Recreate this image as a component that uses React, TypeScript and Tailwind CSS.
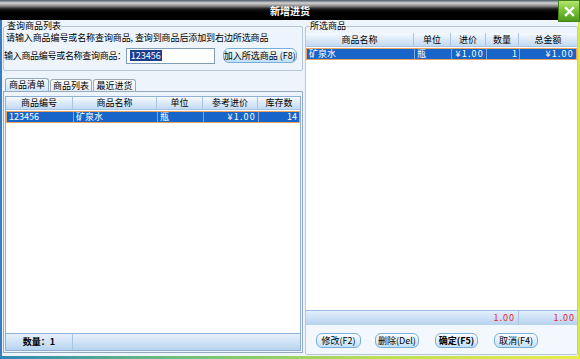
import React from "react";

const FONT = "font-['Noto_Sans_CJK_SC','Noto_Sans',sans-serif]";

function HeaderCell({ children, last }: { children: React.ReactNode; last?: boolean }) {
  return (
    <div
      className={`h-full flex items-center justify-center ${last ? "" : "border-r border-[#a9c3e0]"}`}
    >
      {children}
    </div>
  );
}

function RowCell({
  children,
  right,
  last,
}: {
  children?: React.ReactNode;
  right?: boolean;
  last?: boolean;
}) {
  return (
    <div
      className={`h-full flex items-center px-[2px] ${right ? "justify-end" : "justify-start"} ${
        last ? "" : "border-r border-[#7fa6dc]"
      }`}
    >
      {children}
    </div>
  );
}

function PillButton({ children, bold }: { children: React.ReactNode; bold?: boolean }) {
  return (
    <div
      className={`h-[15px] flex items-center justify-center whitespace-nowrap rounded-[6px] border border-[#7aaed6] bg-[linear-gradient(to_bottom,#f6fbff,#dceefc_55%,#bfe0f8)] text-[9px] text-black shadow-[inset_0_1px_0_#ffffff] ${
        bold ? "font-bold" : ""
      }`}
    >
      {children}
    </div>
  );
}

export default function App() {
  return (
    <div
      className={`w-[580px] h-[359px] overflow-hidden relative flex flex-col bg-[#eef4fb] text-[9px] leading-[10px] text-black ${FONT}`}
    >
      {/* Title bar */}
      <div className="h-[20px] shrink-0 flex items-center justify-center bg-[linear-gradient(to_bottom,#4a5868_0px,#d4d4d4_3px,#8a8a8a_6px,#1a1a1a_9px,#000000_12px,#000000)]">
        <span className="text-white font-bold text-[10px] leading-[10px] mt-[2px]">新增进货</span>
      </div>

      {/* Close button (window control) */}
      <div className="absolute top-0 right-0 w-[22px] h-[22px] flex items-center justify-center border border-[#3f7f18] bg-[linear-gradient(to_bottom,#b5e66e,#7cc43a_45%,#4f9a1c)]">
        <svg width="11" height="11" viewBox="0 0 11 11">
          <path d="M2 2 L9 9 M9 2 L2 9" stroke="#ffffff" strokeWidth="2.4" strokeLinecap="square" />
        </svg>
      </div>

      {/* Body */}
      <div className="flex-1 flex min-h-0">
        <div className="w-[2px] bg-[#3a7cc2] shrink-0" />
        <div className="flex-1 flex gap-[2px] pl-[1px] bg-[#eef4fb]">
          {/* Left column */}
          <div className="w-[300px] flex flex-col">
            <fieldset className="border border-[#b5c6d8] rounded-[2px] mt-[1px] px-0">
              <legend className="ml-[3px] px-0 text-[9px] leading-[10px]">查询商品列表</legend>
              <div className="h-[39px] flex flex-col">
                <div className="pl-[2px] pt-[2px] whitespace-nowrap tracking-[-0.1px]">
                  请输入商品编号或名称查询商品, 查询到商品后添加到右边所选商品
                </div>
                <div className="flex items-center mt-[4px] h-[17px]">
                  <span className="whitespace-nowrap tracking-[-0.3px] shrink-0">输入商品编号或名称查询商品：</span>
                  <div className="shrink-0 w-[89px] h-[16px] border border-[#7f9db9] bg-white flex items-center pl-[3px]">
                    <span className="bg-[#1c3d8c] text-white px-[1px] leading-[11px]">123456</span>
                  </div>
                  <div className="ml-[8px] w-[74px] shrink-0">
                    <PillButton>加入所选商品 (F8)</PillButton>
                  </div>
                </div>
              </div>
            </fieldset>

            {/* Tabs */}
            <div className="flex mt-[7px] h-[13px] pl-[2px] items-end">
              <div className="w-[44px] h-[13px] flex items-center justify-center border border-b-0 border-[#8fa8c4] rounded-t-[3px] bg-[linear-gradient(to_bottom,#f4faff,#cfe5f8)]">
                商品清单
              </div>
              <div className="w-[42px] h-[12px] ml-[1px] flex items-center justify-center border border-b-0 border-[#a0a8b4] rounded-t-[3px] bg-[linear-gradient(to_bottom,#ffffff,#e8ecf0)]">
                商品列表
              </div>
              <div className="w-[43px] h-[12px] ml-[1px] flex items-center justify-center border border-b-0 border-[#a0a8b4] rounded-t-[3px] bg-[linear-gradient(to_bottom,#ffffff,#e8ecf0)]">
                最近进货
              </div>
            </div>

            {/* Table panel */}
            <div className="flex-1 flex flex-col border border-[#95a9bf] bg-[#eef4fb] pt-[4px] pb-[1px] px-[1px] mb-[3px]">
              <div className="flex-1 flex flex-col border border-[#8fb0d6] bg-white">
                <div className="grid grid-cols-[67px_84px_46px_55px_1fr] h-[13px] bg-[linear-gradient(to_bottom,#f6faff,#dbe9f8_50%,#c3daf3)] border-b border-[#a8c4e4]">
                  <HeaderCell>商品编号</HeaderCell>
                  <HeaderCell>商品名称</HeaderCell>
                  <HeaderCell>单位</HeaderCell>
                  <HeaderCell>参考进价</HeaderCell>
                  <HeaderCell last>库存数</HeaderCell>
                </div>
                <div className="grid grid-cols-[67px_84px_46px_55px_1fr] h-[12px] mt-[1px] bg-[#1765c9] text-white border border-[#e9a35f]">
                  <RowCell>123456</RowCell>
                  <RowCell>矿泉水</RowCell>
                  <RowCell>瓶</RowCell>
                  <RowCell right>
                    <span className="tracking-[1.2px]">¥1.00</span>
                  </RowCell>
                  <RowCell right last>
                    14
                  </RowCell>
                </div>
                <div className="flex-1" />
                <div className="h-[17px] flex border-t border-[#8fb4de] bg-[linear-gradient(to_bottom,#e6f0fb,#cfe2f6_50%,#b8d3ef)]">
                  <div className="w-[67px] flex items-center justify-center border-r border-[#a9c3e0] font-bold">
                    数量：1
                  </div>
                  <div className="flex-1" />
                </div>
              </div>
            </div>
          </div>

          {/* Right column */}
          <div className="flex-1 flex flex-col">
            <fieldset className="border border-[#b5c6d8] rounded-[2px] mt-[1px] px-0">
              <legend className="ml-[4px] px-0 text-[9px] leading-[10px]">所选商品</legend>
              <div className="h-[323px] flex flex-col pt-[2px]">
                <div className="flex-1 flex flex-col bg-white">
                  <div className="grid grid-cols-[108px_37px_35px_33px_1fr] h-[14px] bg-[linear-gradient(to_bottom,#f6faff,#dbe9f8_50%,#c3daf3)] border-b border-[#a8c4e4]">
                    <HeaderCell>商品名称</HeaderCell>
                    <HeaderCell>单位</HeaderCell>
                    <HeaderCell>进价</HeaderCell>
                    <HeaderCell>数量</HeaderCell>
                    <HeaderCell last>总金额</HeaderCell>
                  </div>
                  <div className="grid grid-cols-[108px_37px_35px_33px_1fr] h-[12px] mt-[1px] bg-[#1765c9] text-white border border-[#e9a35f]">
                    <RowCell>矿泉水</RowCell>
                    <RowCell>瓶</RowCell>
                    <RowCell right>
                      <span className="tracking-[1.2px]">¥1.00</span>
                    </RowCell>
                    <RowCell right>1</RowCell>
                    <RowCell right last>
                      <span className="tracking-[1.2px]">¥1.00</span>
                    </RowCell>
                  </div>
                  <div className="flex-1" />
                </div>
                <div className="grid grid-cols-[108px_37px_35px_33px_1fr] h-[15px] shrink-0 border-t border-[#9dbde2] bg-[linear-gradient(to_bottom,#e2eefb,#cde1f6_50%,#b6d1ef)] text-[#e8262a]">
                  <div />
                  <div />
                  <div />
                  <div className="flex items-center justify-end pr-[3px] border-r border-[#a9c3e0] tracking-[1px]">
                    1.00
                  </div>
                  <div className="flex items-center justify-end pr-[2px] tracking-[1px]">1.00</div>
                </div>
                <div className="h-[29px] shrink-0 flex items-center gap-[14px] pl-[10px] pt-[2px] bg-[#f2f8fe]">
                  <div className="w-[45px]">
                    <PillButton>修改(F2)</PillButton>
                  </div>
                  <div className="w-[44px]">
                    <PillButton>删除(Del)</PillButton>
                  </div>
                  <div className="w-[43px] ml-[2px]">
                    <PillButton bold>确定(F5)</PillButton>
                  </div>
                  <div className="w-[44px] ml-[2px]">
                    <PillButton>取消(F4)</PillButton>
                  </div>
                </div>
              </div>
            </fieldset>
          </div>
        </div>
        <div className="w-[2px] bg-[#dbe84c] shrink-0" />
      </div>
      <div className="h-[3px] shrink-0 bg-[linear-gradient(to_right,#2f86b6,#6cbf7a_30%,#b9df55_65%,#e6ee4a)]" />
    </div>
  );
}
